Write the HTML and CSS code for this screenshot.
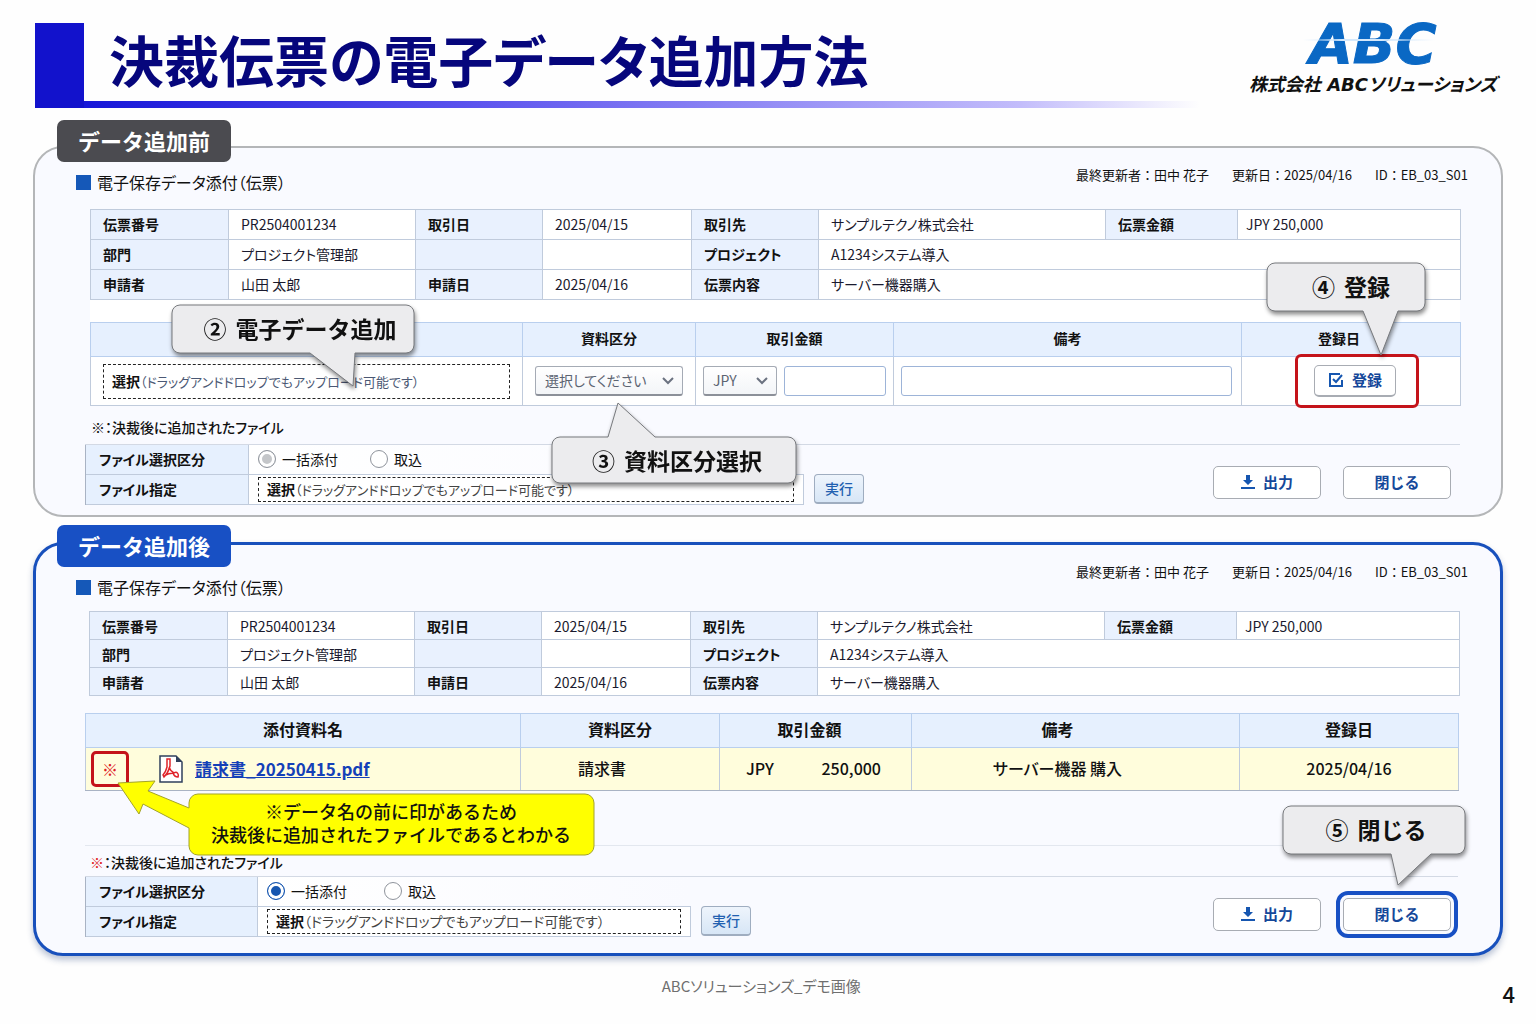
FILE: index.html
```html
<!DOCTYPE html>
<html lang="ja">
<head>
    <meta charset="UTF-8">
    <meta name="viewport" content="width=device-width, initial-scale=1.0">
    <title>決裁伝票の電子データ追加方法</title>
    <link rel="stylesheet" href="styles.css">
</head>
<body>
    <header class="page-header">
        <h1>決裁伝票の電子データ追加方法</h1>
        <div class="brand">
            <div class="brand-logo">ABC</div>
            <div class="brand-name">株式会社 ABCソリューションズ</div>
        </div>
    </header>

    <main>
        <!-- データ追加前 -->
        <section class="panel before">
            <div class="tab">データ追加前</div>
            <div class="panel-head">
                <h2>電子保存データ添付（伝票）</h2>
                <p class="meta"><span>最終更新者：田中 花子</span><span>更新日：2025/04/16</span><span>ID：EB_03_S01</span></p>
            </div>

            <div class="sheet">
                <table class="info">
                    <colgroup>
                        <col class="c1"><col class="c2"><col class="c3"><col class="c4"><col class="c5"><col class="c6"><col class="c7"><col class="c8">
                    </colgroup>
                    <tr>
                        <th>伝票番号</th><td>PR2504001234</td>
                        <th>取引日</th><td>2025/04/15</td>
                        <th>取引先</th><td>サンプルテクノ株式会社</td>
                        <th>伝票金額</th><td class="amount">JPY 250,000</td>
                    </tr>
                    <tr>
                        <th>部門</th><td>プロジェクト管理部</td>
                        <th></th><td></td>
                        <th>プロジェクト</th><td colspan="3">A1234システム導入</td>
                    </tr>
                    <tr>
                        <th>申請者</th><td>山田 太郎</td>
                        <th>申請日</th><td>2025/04/16</td>
                        <th>伝票内容</th><td colspan="3">サーバー機器購入</td>
                    </tr>
                </table>

                <table class="attach edit">
                    <colgroup>
                        <col class="name"><col class="kind"><col class="price"><col class="remark"><col class="date">
                    </colgroup>
                    <tr>
                        <th></th><th>資料区分</th><th>取引金額</th><th>備考</th><th class="date-head">登録日</th>
                    </tr>
                    <tr>
                        <td>
                            <label class="drop"><b>選択</b>（ドラッグアンドドロップでもアップロード可能です）<input type="file"></label>
                        </td>
                        <td>
                            <span class="select">
                                <select aria-label="資料区分"><option>選択してください</option><option>請求書</option></select>
                                <svg width="14" height="10" viewBox="0 0 14 10"><path d="M2 2l5 5 5-5" fill="none" stroke="#6b7280" stroke-width="2"/></svg>
                            </span>
                        </td>
                        <td>
                            <div class="price-fields">
                                <span class="select">
                                    <select aria-label="通貨"><option>JPY</option><option>USD</option></select>
                                    <svg width="14" height="10" viewBox="0 0 14 10"><path d="M2 2l5 5 5-5" fill="none" stroke="#6b7280" stroke-width="2"/></svg>
                                </span>
                                <input type="text" aria-label="取引金額">
                            </div>
                        </td>
                        <td><input type="text" aria-label="備考"></td>
                        <td class="register-cell">
                            <span class="red-frame">
                                <button class="register" type="button">
                                    <svg width="16" height="16" viewBox="0 0 16 16" fill="none" stroke="#1656b0" stroke-width="2"><path d="M14 8v6H2V2h10"/><path d="M5 7l3 3 6-7"/></svg>
                                    登録
                                </button>
                            </span>
                        </td>
                    </tr>
                </table>
            </div>

            <p class="note">※：決裁後に追加されたファイル</p>

            <div class="form">
                <div class="rows">
                    <div class="row">
                        <span class="label">ファイル選択区分</span>
                        <div class="field radios">
                            <label><input type="radio" name="before-mode" checked>一括添付</label>
                            <label><input type="radio" name="before-mode">取込</label>
                        </div>
                    </div>
                    <div class="row">
                        <span class="label">ファイル指定</span>
                        <div class="field boxed">
                            <label class="drop"><b>選択</b>（ドラッグアンドドロップでもアップロード可能です）<input type="file"></label>
                        </div>
                    </div>
                </div>
                <button class="run" type="button">実行</button>
                <div class="actions">
                    <button type="button">
                        <svg width="14" height="14" viewBox="0 0 14 14" fill="#1656b0"><path d="M5 0h4v5h3L7 10 2 5h3z"/><path d="M0 12h14v2H0z"/></svg>
                        出力
                    </button>
                    <button type="button">閉じる</button>
                </div>
            </div>

            <div class="callout step2">
                <svg width="244" height="84" viewBox="0 0 244 84"><path d="M9 1H235a8 8 0 0 1 8 8V41a8 8 0 0 1-8 8H184L182 82 139 49H9a8 8 0 0 1-8-8V9a8 8 0 0 1 8-8z"/></svg>
                <p><span>②</span><span>電子データ追加</span></p>
            </div>
            <div class="callout step3">
                <svg width="246" height="82" viewBox="0 0 246 82"><path d="M9 35H57L67 1 104 35H237a8 8 0 0 1 8 8V73a8 8 0 0 1-8 8H9a8 8 0 0 1-8-8V43a8 8 0 0 1 8-8z"/></svg>
                <p><span>③</span><span>資料区分選択</span></p>
            </div>
            <div class="callout step4">
                <svg width="160" height="95" viewBox="0 0 160 95"><path d="M9 1H151a8 8 0 0 1 8 8V41a8 8 0 0 1-8 8H132L115 93 97 49H9a8 8 0 0 1-8-8V9a8 8 0 0 1 8-8z"/></svg>
                <p><span>④</span><span>登録</span></p>
            </div>
        </section>

        <!-- データ追加後 -->
        <section class="panel after">
            <div class="tab">データ追加後</div>
            <div class="panel-head">
                <h2>電子保存データ添付（伝票）</h2>
                <p class="meta"><span>最終更新者：田中 花子</span><span>更新日：2025/04/16</span><span>ID：EB_03_S01</span></p>
            </div>

            <table class="info">
                <colgroup>
                    <col class="c1"><col class="c2"><col class="c3"><col class="c4"><col class="c5"><col class="c6"><col class="c7"><col class="c8">
                </colgroup>
                <tr>
                    <th>伝票番号</th><td>PR2504001234</td>
                    <th>取引日</th><td>2025/04/15</td>
                    <th>取引先</th><td>サンプルテクノ株式会社</td>
                    <th>伝票金額</th><td class="amount">JPY 250,000</td>
                </tr>
                <tr>
                    <th>部門</th><td>プロジェクト管理部</td>
                    <th></th><td></td>
                    <th>プロジェクト</th><td colspan="3">A1234システム導入</td>
                </tr>
                <tr>
                    <th>申請者</th><td>山田 太郎</td>
                    <th>申請日</th><td>2025/04/16</td>
                    <th>伝票内容</th><td colspan="3">サーバー機器購入</td>
                </tr>
            </table>

            <table class="attach result">
                <colgroup>
                    <col class="name"><col class="kind"><col class="price"><col class="remark"><col class="date">
                </colgroup>
                <tr>
                    <th>添付資料名</th><th>資料区分</th><th class="price-head">取引金額</th><th class="shifted">備考</th><th>登録日</th>
                </tr>
                <tr>
                    <td>
                        <div class="file">
                            <span class="mark">※</span>
                            <svg width="24" height="28" viewBox="0 0 24 28">
                                <path d="M1 1h16l6 6v20H1z" fill="#fff" stroke="#30405c" stroke-width="1.5"/>
                                <path d="M17 1v6h6z" fill="#30405c"/>
                                <path d="M8 4h3v7c-1 4-3 8-6 11l-1-2c2-2 3-4 4-8zM10 12c1 3 3 5 5 6M5 21c3-2 6-3 10-3 3-2 5 1 4 4-2 0-4-1-5-4" fill="none" stroke="#e0242b" stroke-width="1.5"/>
                            </svg>
                            <a href="#">請求書_20250415.pdf</a>
                        </div>
                    </td>
                    <td class="shifted">請求書</td>
                    <td><div class="price-value"><span>JPY</span><span>250,000</span></div></td>
                    <td class="shifted">サーバー機器 購入</td>
                    <td>2025/04/16</td>
                </tr>
            </table>

            <p class="note"><span class="red">※</span>：決裁後に追加されたファイル</p>

            <div class="form">
                <div class="rows">
                    <div class="row">
                        <span class="label">ファイル選択区分</span>
                        <div class="field radios">
                            <label><input type="radio" name="after-mode" checked>一括添付</label>
                            <label><input type="radio" name="after-mode">取込</label>
                        </div>
                    </div>
                    <div class="row">
                        <span class="label">ファイル指定</span>
                        <div class="field boxed">
                            <label class="drop"><b>選択</b>（ドラッグアンドドロップでもアップロード可能です）<input type="file"></label>
                        </div>
                    </div>
                </div>
                <button class="run" type="button">実行</button>
                <div class="actions">
                    <button type="button">
                        <svg width="14" height="14" viewBox="0 0 14 14" fill="#1656b0"><path d="M5 0h4v5h3L7 10 2 5h3z"/><path d="M0 12h14v2H0z"/></svg>
                        出力
                    </button>
                    <button class="focus" type="button">閉じる</button>
                </div>
            </div>

            <div class="callout hint">
                <svg width="478" height="76" viewBox="0 0 478 76"><path d="M1 3L38 1 31 11 72 28V23a9 9 0 0 1 9-9H468a9 9 0 0 1 9 9V66a9 9 0 0 1-9 9H81a9 9 0 0 1-9-9V48L26 24 22 34z"/></svg>
                <p>※データ名の前に印があるため<br>決裁後に追加されたファイルであるとわかる</p>
            </div>
            <div class="callout step5">
                <svg width="184" height="82" viewBox="0 0 184 82"><path d="M9 1H175a8 8 0 0 1 8 8V41a8 8 0 0 1-8 8H149L116 80 109 49H9a8 8 0 0 1-8-8V9a8 8 0 0 1 8-8z"/></svg>
                <p><span>⑤</span><span>閉じる</span></p>
            </div>
        </section>
    </main>

    <footer class="page-footer">
        <span class="caption">ABCソリューションズ_デモ画像</span>
        <span class="page-no">4</span>
    </footer>
</body>
</html>
```

FILE: styles.css
```css
* {
    box-sizing: border-box;
}
body {
    margin: 0;
    background-color: #fefefe;
    color: #111;
    font-family: "Noto Sans CJK JP", sans-serif;
    font-size: 14px;
    line-height: 24px;
    font-feature-settings: "palt";
}
h1, h2, p {
    margin: 0;
}
button, input, select {
    font: inherit;
    font-feature-settings: inherit;
}

/* header */
.page-header {
    display: flex;
    justify-content: space-between;
    margin: 23px 39px 0 35px;
    height: 85px;
    border-left: 49px solid #1212cc;
    background: linear-gradient(to right, #1616d8, #5c54ee 35%, #c3bdfb 84%, #fefefe) left bottom / 1116px 7px no-repeat;
}
h1 {
    padding-left: 25px;
    color: #06067c;
    font-size: 55px;
    line-height: 70px;
}
.brand {
    text-align: center;
    font-weight: bold;
    font-style: italic;
    font-family: "DejaVu Sans", "Noto Sans CJK JP", sans-serif;
}
.brand-logo {
    position: relative;
    color: #0a68c4;
    font-size: 56px;
    line-height: 42px;
    -webkit-text-stroke: 1px #0a68c4;
}
.brand-logo::after {
    content: "";
    position: absolute;
    left: 22%;
    right: 25%;
    top: 16px;
    height: 2px;
    background: linear-gradient(to right, transparent, #d4e8fb 30%, #d4e8fb 60%, transparent);
}
.brand-name {
    margin-top: 8px;
    font-size: 18px;
}

/* panels */
.panel {
    position: relative;
    margin: 38px 33px 0;
    border: 2px solid #b4b6b8;
    border-radius: 30px;
    background-color: #f9faff;
}
.panel.after {
    margin-top: 25px;
    border: 3px solid #1850bc;
    box-shadow: 0 4px 6px rgba(30, 60, 120, 0.3);
}
.tab {
    position: absolute;
    left: 22px;
    top: -28px;
    padding: 0 21px 2px;
    border-radius: 7px;
    background-color: #4b4b50;
    color: #fff;
    font-size: 22px;
    font-weight: bold;
    line-height: 40px;
    font-feature-settings: normal;
}
.after .tab {
    left: 21px;
    top: -20px;
    background-color: #1850c4;
}
.panel-head {
    display: flex;
    justify-content: space-between;
    height: 61px;
    padding: 15px 33px 0 41px;
}
.after .panel-head {
    height: 66px;
    padding: 15px 32px 0 40px;
}
h2 {
    display: flex;
    align-items: center;
    gap: 6px;
    height: 24px;
    margin-top: 7px;
    font-size: 16px;
    font-weight: normal;
}
.after h2 {
    margin-top: 15px;
}
h2::before {
    content: "";
    width: 15px;
    height: 15px;
    background-color: #1558b8;
}
.meta {
    display: flex;
    gap: 23px;
    font-size: 13px;
    font-feature-settings: normal;
}

/* tables */
table {
    width: 100%;
    table-layout: fixed;
    border-collapse: collapse;
}
th, td {
    padding: 0 12px;
    border: 1px solid #c0cbdc;
}
.sheet {
    margin: 0 41px 0 55px;
    background-color: #fff;
}
.info {
    border: 1px solid #a9b3c4;
}
.info th, .info td {
    height: 30px;
    padding-bottom: 2px;
    line-height: 20px;
    text-align: left;
}
.info th {
    background-color: #e9f1fe;
}
.info td {
    background-color: #fff;
    color: #1a1a2e;
}
.info td.amount {
    padding-left: 8px;
}
.c1 { width: 138px; }
.c2 { width: 187px; }
.c3 { width: 127px; }
.c4 { width: 149px; }
.c5 { width: 127px; }
.c6 { width: 287px; }
.c7 { width: 132px; }
.c8 { width: 223px; }

.after .info {
    width: calc(100% - 95px);
    margin: 0 42px 0 53px;
}
.after .info th, .after .info td {
    height: 28px;
    padding-bottom: 0;
}

.attach th {
    height: 34px;
    padding-bottom: 4px;
    border-color: #b9cfee;
    background-color: #e6f0fe;
}
.edit {
    margin-top: 22px;
    border-bottom: 1px solid #8d939c;
}
.edit td {
    height: 49px;
}
.edit .name { width: 432px; }
.edit .kind { width: 173px; }
.edit .price { width: 198px; }
.edit .remark { width: 348px; }
.edit .date { width: 219px; }
.edit td:nth-child(3) {
    padding: 0 7px;
}
.edit td:nth-child(4) {
    padding: 0 9px 0 7px;
}
.edit .date-head {
    padding-right: 36px;
}
.drop {
    position: relative;
    display: block;
    height: 35px;
    padding: 0 8px;
    border: 1px dashed #222;
    color: #4b5874;
    font-size: 13px;
    line-height: 32px;
    white-space: nowrap;
}
.drop b {
    color: #111;
    font-size: 14px;
}
.drop input {
    position: absolute;
    inset: 0;
    width: 100%;
    opacity: 0;
}
.select {
    position: relative;
    display: block;
}
.select svg {
    position: absolute;
    right: 8px;
    top: 10px;
    pointer-events: none;
}
select {
    display: block;
    width: 100%;
    height: 30px;
    padding: 0 9px 2px;
    appearance: none;
    border: 1px solid #a5abb5;
    border-bottom: 2px solid #8c9099;
    border-radius: 3px;
    background: linear-gradient(#fff, #f3f5f8);
    color: #5c6472;
}
input[type="text"] {
    display: block;
    width: 100%;
    height: 30px;
    border: 1px solid #9db4d8;
    border-radius: 3px;
    background-color: #fff;
}
.price-fields {
    display: grid;
    grid-template-columns: 74px 1fr;
    gap: 7px;
}
.edit .register-cell {
    padding: 0 0 0 12px;
    text-align: center;
}
.red-frame {
    display: inline-block;
    margin: -4px 0;
    padding: 8px 20px 8px 16px;
    border: 3px solid #c4131a;
    border-radius: 6px;
    vertical-align: middle;
}

/* buttons */
button {
    display: flex;
    align-items: center;
    justify-content: center;
    gap: 8px;
    padding: 0 6px 2px;
    border: 1px solid #a8acb3;
    border-radius: 5px;
    background-color: #fff;
    color: #15489a;
    font-size: 15px;
    font-weight: bold;
    font-feature-settings: normal;
    cursor: pointer;
}
.register {
    width: 82px;
    height: 32px;
    border-bottom-width: 2px;
}
.run {
    width: 50px;
    height: 30px;
    margin: 29px 0 0 10px;
    border-color: #9fadc0;
    border-bottom-width: 2px;
    border-radius: 4px;
    background: linear-gradient(#eef4fc, #d7e6f6);
    color: #2160b0;
    font-size: 14px;
    font-weight: 500;
}
.actions {
    display: flex;
    gap: 22px;
    margin: 21px 9px 0 auto;
}
.actions button {
    width: 108px;
    height: 33px;
}
.actions .focus {
    outline: 4px solid #1850c4;
    outline-offset: 3px;
}

/* note and file form */
.note {
    padding: 9px 0 5px 56px;
    font-weight: 500;
}
.red {
    color: #e01b24;
}
.form {
    display: flex;
    align-items: flex-start;
    margin: 0 41px 10px 50px;
    border-top: 1px solid #d3d9e4;
}
.rows {
    width: 719px;
    border-left: 1px solid #a9b3c4;
}
.row {
    display: flex;
    height: 30px;
    border-bottom: 1px solid #c0cbdc;
}
.label {
    width: 163px;
    padding-left: 13px;
    border-right: 1px solid #c0cbdc;
    background-color: #e6f0fe;
    font-weight: bold;
    line-height: 28px;
}
.field {
    flex: 1;
}
.radios {
    display: flex;
    gap: 32px;
    padding: 0 0 2px 9px;
    background: linear-gradient(to right, #fff, #f9faff);
}
.radios label {
    display: flex;
    align-items: center;
    gap: 6px;
}
.radios input {
    width: 18px;
    height: 18px;
    margin: 0;
    appearance: none;
    border: 1px solid #8f949c;
    border-radius: 50%;
    background-color: #fff;
}
.radios input:checked {
    background-color: #c4c6c9;
    box-shadow: inset 0 0 0 3px #fff;
}
.boxed {
    padding: 2px 9px;
    border-right: 1px solid #c0cbdc;
    background-color: #fff;
}
.form .drop {
    height: 25px;
    color: #444;
    line-height: 22px;
}
.after .drop {
    font-size: 14px;
}

/* data added */
.result {
    width: calc(100% - 91px);
    margin: 17px 42px 0 49px;
    font-size: 16px;
}
.result th {
    font-size: 16px;
}
.result td {
    height: 43px;
    padding-bottom: 2px;
    background-color: #fffddc;
    border-bottom-color: #a9b3c4;
    font-weight: 500;
    text-align: center;
}
.result .name { width: 435px; }
.result .kind { width: 199px; }
.result .price { width: 192px; }
.result .remark { width: 328px; }
.result .date { width: 219px; }
.result .shifted {
    padding-right: 48px;
}
.result .price-head {
    padding-right: 24px;
}
.result td:first-child {
    padding: 0 5px;
}
.file {
    display: flex;
    align-items: center;
}
.mark {
    width: 38px;
    margin-right: 30px;
    border: 3px solid #c4131a;
    border-radius: 5px;
    color: #e01b24;
    line-height: 30px;
}
.file a {
    margin-left: 12px;
    color: #1440b8;
    font-size: 17px;
    font-weight: bold;
}
.price-value {
    display: flex;
    justify-content: space-between;
    padding: 0 18px 0 14px;
}
.after .note {
    margin: 54px 42px 0 49px;
    padding: 4px 0 2px 5px;
    border-top: 1px solid #e3e7ef;
}
.after .form {
    margin: 0 42px 16px 49px;
}
.after .rows {
    width: 606px;
}
.after .label {
    width: 172px;
}
.after .radios {
    gap: 37px;
}
.after .radios input:checked {
    border-color: #1656b0;
    background-color: #1656b0;
}
.after .actions {
    margin-right: 7px;
}

/* callouts */
.callout {
    position: absolute;
    font-size: 23px;
    font-weight: bold;
    font-feature-settings: normal;
}
.callout svg {
    display: block;
    overflow: visible;
    fill: #ececee;
    stroke: #77797d;
    stroke-width: 1;
    filter: drop-shadow(1px 3px 2px rgba(0, 0, 0, 0.45));
}
.callout p {
    position: absolute;
    inset: 0;
    display: flex;
    justify-content: center;
    gap: 9px;
    line-height: 48px;
    white-space: nowrap;
}
.step2 { left: 136px; top: 156px; }
.step2 p { padding-left: 14px; }
.step3 { left: 516px; top: 254px; }
.step3 p { padding: 34px 0 0 6px; }
.step4 { right: 75px; top: 114px; }
.step4 p { padding-left: 10px; }
.step5 { right: 34px; top: 260px; }
.step5 p { padding-left: 4px; }
.hint {
    left: 81px;
    top: 235px;
    font-size: 18px;
    font-weight: 500;
}
.hint svg {
    fill: #ffff00;
    stroke: #a3a32a;
    filter: none;
}
.hint p {
    display: block;
    padding: 20px 0 0 70px;
    line-height: 23px;
    text-align: center;
}

/* footer */
.page-footer {
    display: flex;
    margin-top: 18px;
    padding-right: 21px;
}
.caption {
    flex: 1;
    padding-left: 20px;
    color: #6f6f6f;
    font-size: 15px;
    text-align: center;
}
.page-no {
    padding-top: 7px;
    font-size: 22px;
    font-weight: 500;
}
```
